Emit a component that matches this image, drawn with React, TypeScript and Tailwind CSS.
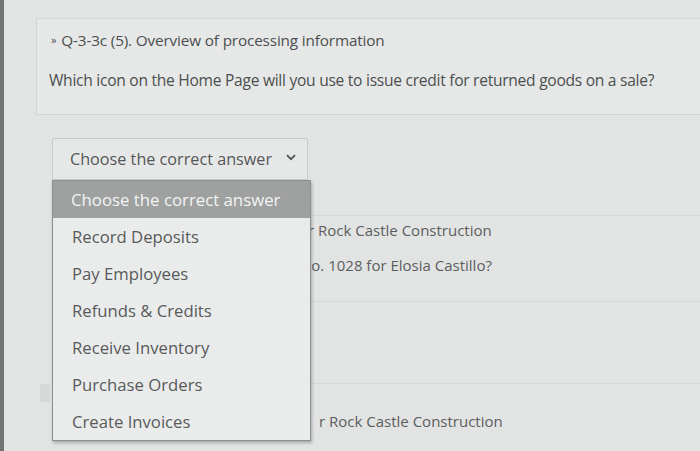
import React from "react";

const items = [
  "Record Deposits",
  "Pay Employees",
  "Refunds & Credits",
  "Receive Inventory",
  "Purchase Orders",
  "Create Invoices",
];

export default function App() {
  return (
    <div
      className="relative w-[700px] h-[451px] overflow-hidden bg-[#e2e4e4] flex text-[#4c4e4e]"
      style={{ fontFamily: '"Open Sans", "Noto Sans", sans-serif' }}
    >
      <div className="w-[4px] bg-[#727474] shrink-0" />
      <div className="flex-1 flex flex-col pt-[18px] pl-[32px]">
        {/* question card */}
        <div className="h-[97px] border-t border-l border-b border-[#d4d6d6] bg-[#e6e8e8] pl-[14px] pt-[10px] flex flex-col">
          <div className="text-[15.3px] leading-[22px] tracking-[-0.15px] flex items-center">
            <span className="text-[11px] mr-[5px]">»</span>
            <span>Q-3-3c (5). Overview of processing information</span>
          </div>
          <div className="mt-[18px] ml-[-2px] text-[15.6px] leading-[22px] tracking-[-0.28px]">
            Which icon on the Home Page will you use to issue credit for returned goods on a sale?
          </div>
        </div>

        {/* answer area */}
        <div className="flex-1 relative pl-[16px] pt-[23px]">
          <div className="w-[256px] h-[42px] border border-[#c9cbcb] rounded-[2px] bg-[#e6e8e8] flex items-center justify-between pl-[17px] pr-[11px]">
            <span className="text-[16.2px] text-[#555757]">Choose the correct answer</span>
            <svg width="10" height="7" viewBox="0 0 10 7" className="mt-[-3px]">
              <path d="M1 1.2 L5 5.2 L9 1.2" fill="none" stroke="#505252" strokeWidth="1.8" />
            </svg>
          </div>

          {/* background rows */}
          <div className="mt-[35px] border-t border-[#d6d8d8] pl-[256px]">
            <div className="h-[28px] text-[15px] text-[#5c5e5e] flex items-center whitespace-nowrap">
              r Rock Castle Construction
            </div>
            <div className="h-[42px] text-[15px] text-[#5c5e5e] flex items-center whitespace-nowrap ml-[-8px]">
              No. 1028 for Elosia Castillo?
            </div>
          </div>
          <div className="mt-[15px] border-t border-[#d6d8d8] h-[82px]" />
          <div className="border-t border-[#d6d8d8] flex">
            <div className="w-[10px] h-[18px] bg-[#d7d9d9] ml-[-12px]" />
            <div className="pl-[269px] pt-[26px] text-[15px] text-[#5c5e5e] whitespace-nowrap">
              r Rock Castle Construction
            </div>
          </div>

          {/* dropdown menu */}
          <div className="absolute left-[16px] top-[65px] w-[259px] border border-[#8e9090] bg-[#eaecec] shadow-[1px_2px_3px_rgba(0,0,0,0.25)] flex flex-col">
            <div className="h-[37px] bg-[#9fa1a1] text-[#f2f4f4] text-[16.8px] flex items-center pl-[18px]">
              Choose the correct answer
            </div>
            {items.map((t) => (
              <div key={t} className="h-[37px] text-[16.7px] text-[#585a5a] flex items-center pl-[19px]">
                {t}
              </div>
            ))}
          </div>
        </div>
      </div>
    </div>
  );
}
